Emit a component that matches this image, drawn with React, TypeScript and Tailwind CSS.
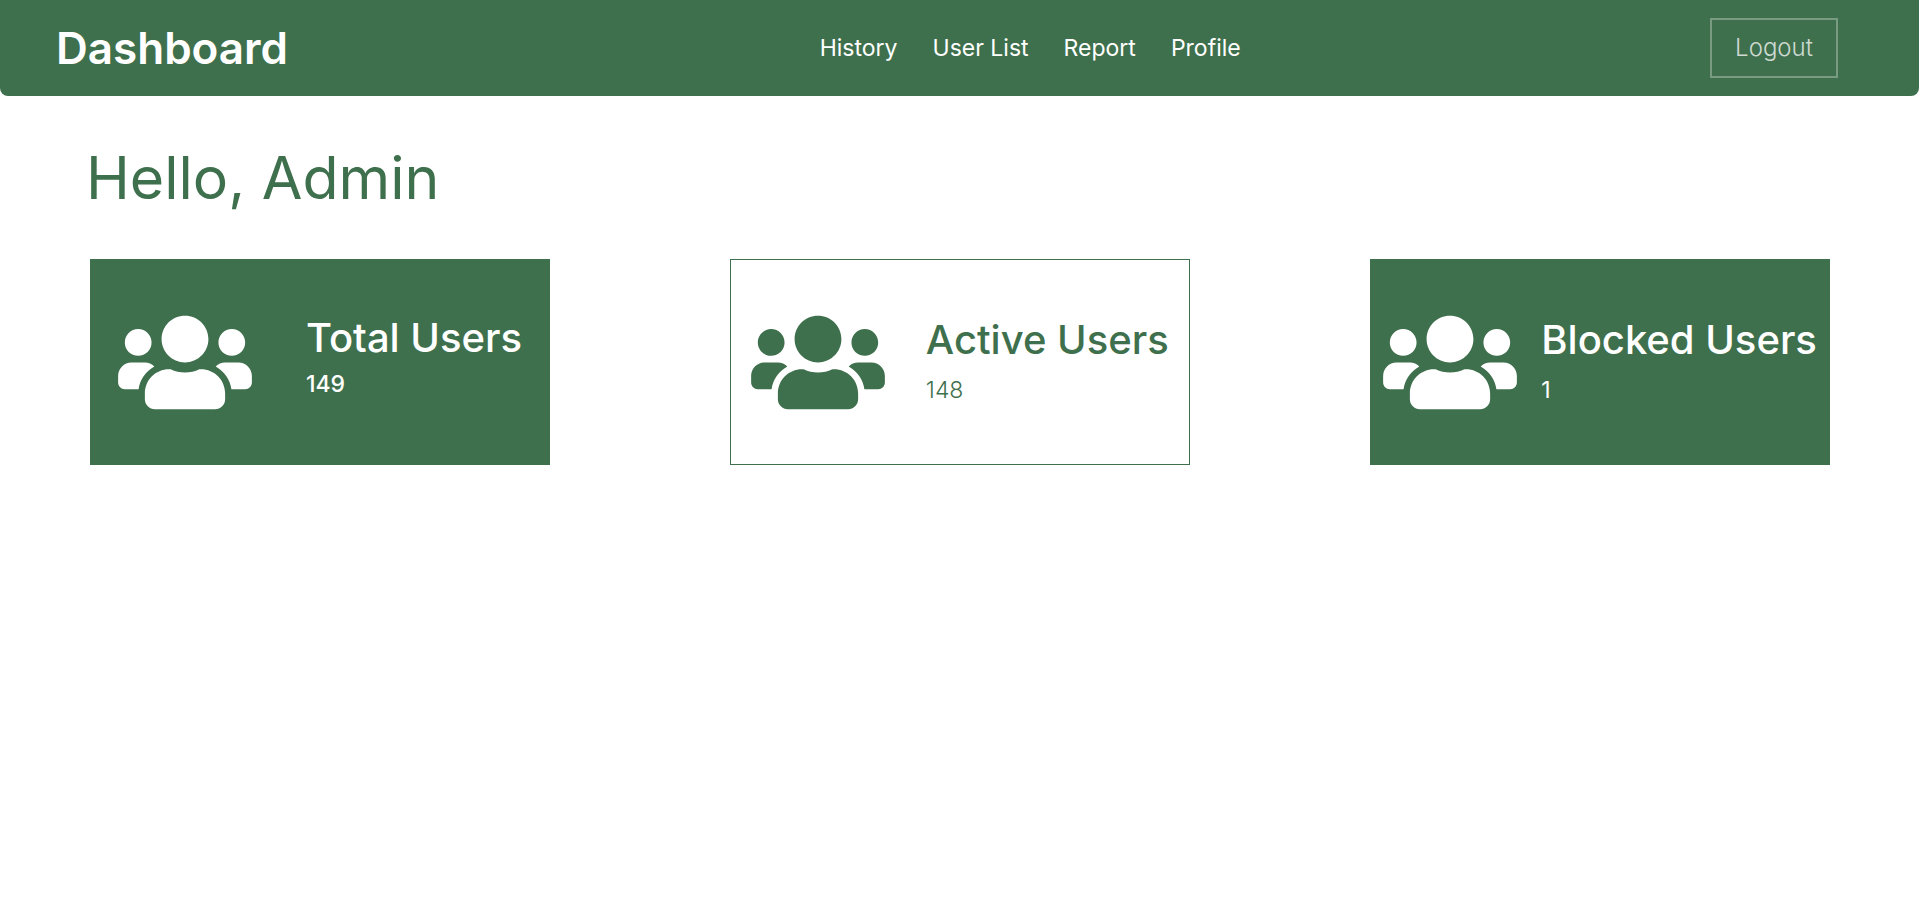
import { FaUsers } from "react-icons/fa";

const links = ["History", "User List", "Report", "Profile"];

type CardProps = {
  title: string;
  count: number;
  className: string;
  countClass: string;
};

function StatCard({ title, count, className, countClass }: CardProps) {
  return (
    <section className={`flex h-[206px] w-[460px] items-center justify-around border border-[#3f704d] ${className}`}>
      <FaUsers className="h-[107px] w-[134px] shrink-0" aria-hidden="true" />
      <div className="whitespace-nowrap">
        <h2 className="text-[40px] leading-[48px] font-medium">{title}</h2>
        <p className={`text-[23px] leading-7 ${countClass}`}>{count}</p>
      </div>
    </section>
  );
}

export default function App() {
  return (
    <div className="min-h-screen bg-white font-['Inter',sans-serif]">
      <header className="grid h-24 grid-cols-7 items-center rounded-b-lg bg-[#3f704d] pr-[81px] pl-14 text-white">
        <div className="col-span-3 text-[44px] leading-[52px] font-semibold">Dashboard</div>
        <nav className="col-span-3 flex gap-[35px] text-[23px] leading-7">
          {links.map((l) => (
            <a key={l} href="#" className="whitespace-nowrap">
              {l}
            </a>
          ))}
        </nav>
        <button
          type="button"
          className="h-[60px] w-32 justify-self-end border-2 border-white/30 text-2xl leading-7 font-light text-white/75"
        >
          Logout
        </button>
      </header>
      <main className="pt-12">
        <h1 className="px-[86px] text-[59px] leading-[68px] text-[#3f704d]">Hello, Admin</h1>
        <div className="mt-[47px] flex flex-wrap justify-between gap-y-8 pr-[89px] pl-[90px]">
          <StatCard
            title="Total Users"
            count={149}
            className="bg-[#3f704d] text-white"
            countClass="mt-2 pb-3 font-medium"
          />
          <StatCard
            title="Active Users"
            count={148}
            className="bg-white text-[#3f704d]"
            countClass="mt-3 pb-1 font-light"
          />
          <StatCard
            title="Blocked Users"
            count={1}
            className="bg-[#3f704d] text-white"
            countClass="mt-3 pb-1"
          />
        </div>
      </main>
    </div>
  );
}
